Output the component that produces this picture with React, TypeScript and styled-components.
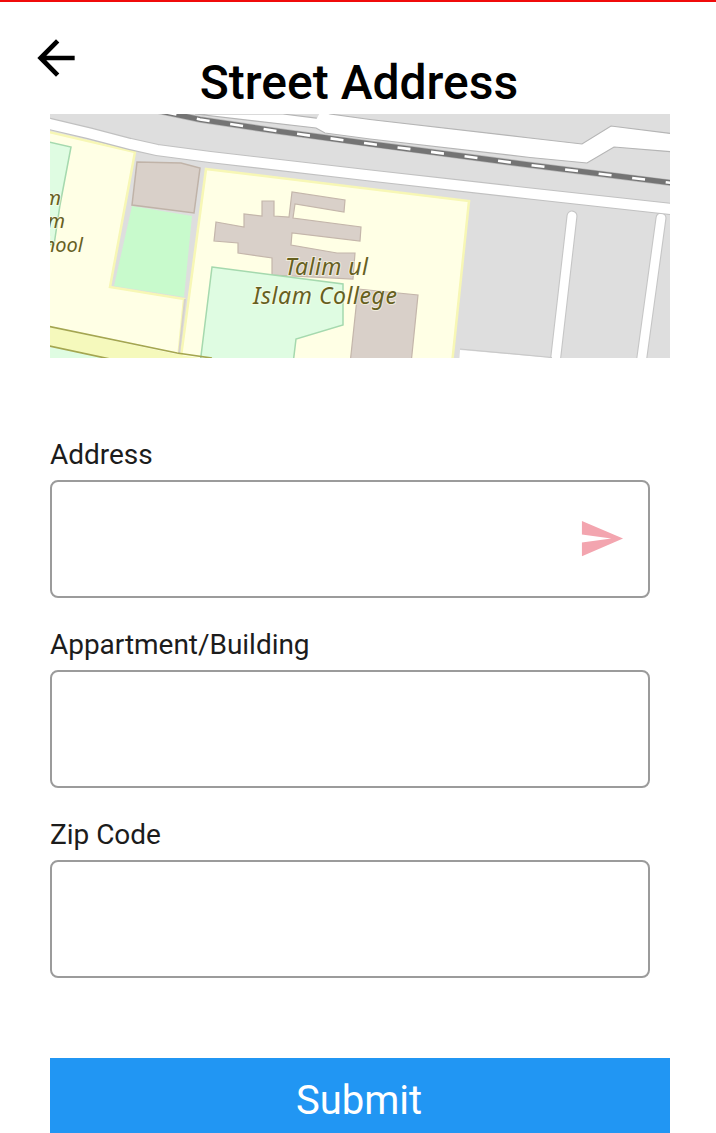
import React from "react";
import styled, { createGlobalStyle } from "styled-components";

const GlobalStyle = createGlobalStyle`
  * { box-sizing: border-box; }
  body { margin: 0; background: #fff; font-family: Roboto, "Liberation Sans", sans-serif; }
`;

const Screen = styled.main`
  display: flex;
  flex-direction: column;
  width: 716px;
  height: 1133px;
  overflow: hidden;
  border-top: 2px solid #f00b0b;
  background: #fff;
`;

const Header = styled.header`
  display: grid;
  flex: none;
  grid-template-columns: 84px 1fr 84px;
  height: 112px;
`;

const BackButton = styled.button`
  width: 56px;
  height: 56px;
  margin: 28px 0 0 28px;
  padding: 0;
  border: 0;
  background: none;
  color: #000;

  svg { display: block; }
`;

const Title = styled.h1`
  margin: 53px 0 0 2px;
  font-size: 48px;
  font-weight: 500;
  line-height: 56px;
  text-align: center;
  white-space: nowrap;
  color: #000;
`;

const MapView = styled.svg`
  display: block;
  flex: none;
  width: 620px;
  height: 244px;
  margin-left: 50px;
`;

const Form = styled.form`
  display: flex;
  flex: none;
  flex-direction: column;
  padding: 80px 46px 0 50px;
`;

const Field = styled.label`
  display: flex;
  flex-direction: column;
  width: 600px;
  height: 190px;
`;

const Caption = styled.span`
  height: 42px;
  font-size: 28px;
  line-height: 33px;
  letter-spacing: -0.03px;
  color: #1c1c1c;
`;

const InputBox = styled.span`
  display: flex;
  align-items: center;
  height: 118px;
  padding-right: 23px;
  border: 2px solid #9b9b9b;
  border-radius: 8px;
`;

const SendIcon = styled.svg`
  flex: none;
  width: 47px;
  height: 47px;
  margin-bottom: 2px;
  fill: #f3a5af;
`;

const Input = styled.input`
  flex: 1;
  height: 100%;
  border: 0;
  outline: 0;
  background: transparent;
  padding: 0 20px;
  font: 28px Roboto, sans-serif;
`;

const SubmitButton = styled.button`
  width: 620px;
  height: 84px;
  margin-top: 50px;
  padding: 1px 2px 0 0;
  border: 0;
  background: #2196f3;
  color: #fff;
  font: 400 40px/83px Roboto, sans-serif;
`;

const MapLabel = styled.text`
  font-family: "Noto Sans", "Open Sans", sans-serif;
  font-style: italic;
  fill: #66601f;
  stroke: #fffde8;
  stroke-opacity: 0.6;
  stroke-width: 2px;
  paint-order: stroke;
`;

const mainRoad = "M40 121.5 L50 124 L90 133.5 L130 144 L157 150 L210 157 L370 175.5 L530 193.5 L680 210";
const railway = "M150 109 L200 119.5 L280 131.5 L370 143.8 L530 165 L680 184";
const laneA = "M572 216 L555 364";
const laneB = "M661 218 L641 364";

function CollegeMap() {
  return (
    <MapView viewBox="50 114 620 244" role="img" aria-label="Map">
      <rect x="50" y="114" width="620" height="244" fill="#dedede" />

      <g fill="#ffffe5" stroke="#f7f7b5" strokeWidth="2.5">
        <path d="M40 130 L135 152 L110 287 L184 299 L178 360 L40 340Z" />
        <path d="M206 169 L469 201 L452 364 L180 364Z" />
      </g>
      <path d="M185 299 L179 354" stroke="#d6d1cd" strokeWidth="2" />
      <path d="M132 206 L192 216 L184 297 L114 286Z" fill="#c8facc" />
      <path d="M137 162 L181 163 L200 168 L194 213 L132 205Z" fill="#d9d0c9" stroke="#c0b3a8" strokeWidth="1.5" />

      <path d="M40 140 L71 147 L60 205 L54 245 L40 243Z" fill="#dffce2" stroke="#a5d9ae" strokeWidth="1.5" />
      <g fill="#d9d0c9" stroke="#c4b6ab" strokeWidth="1.2">
        <path d="M216 222 L244 227 L244 214 L262 216 L262 201 L274 201 L274 216 L289 217 L292 192 L345 200 L344 212 L295 204 L293 218 L361 227 L360 241 L292 233 L291 245 L337 253 L355 253 L353 279 L272 275 L272 258 L238 253 L238 243 L214 241Z" />
        <path d="M358 289 L418 295 L411 364 L350 364Z" />
      </g>
      <path d="M212 267 L343 284 L343 325 L296 339 L293 364 L200 364Z" fill="#dffce2" stroke="#a5d9ae" strokeWidth="1.5" />

      <path d="M40 325 L180 355 L212 360 L120 364 L40 345Z" fill="#f5f9bc" />
      <path d="M40 344 L115 360 L40 364Z" fill="#dffce2" />
      <path d="M40 324.5 L177 353 L212 358 M40 344 L110 359" fill="none" stroke="#a4a650" strokeWidth="1.7" />

      <path
        d="M195 114 L283 114 L320 118.5 L325 112 L330 114 L370 119.5 L530 138 L582 144 L611 126 L675 134 L675 152 L614 147 L587 163 L530 157.5 L370 139 L325 133 L316 128Z"
        fill="#fff" stroke="#b5b5b5" strokeWidth="1.2"
      />
      <path d="M320 121 L327 108" stroke="#fff" strokeWidth="8" />

      <g fill="none" strokeLinecap="round">
        <path d={laneA} stroke="#c6c6c6" strokeWidth="11" />
        <path d={laneB} stroke="#c6c6c6" strokeWidth="11" />
        <path d={laneA} stroke="#fff" strokeWidth="8.8" />
        <path d={laneB} stroke="#fff" strokeWidth="8.8" />
      </g>
      <path d="M460 350 L548 357.5 L556 364 L459 364Z" fill="#fff" />
      <path d="M460 349 L552 357.5" stroke="#c9c9c9" strokeWidth="1.2" />

      <path d={mainRoad} fill="none" stroke="#c1c1c1" strokeWidth="12.2" />
      <path d={mainRoad} fill="none" stroke="#fff" strokeWidth="10" />

      <path d={railway} fill="none" stroke="#b8b8b8" strokeWidth="6.6" />
      <path d={railway} fill="none" stroke="#747474" strokeWidth="5.2" />
      <path d={railway} fill="none" stroke="#fff" strokeWidth="2.6" strokeDasharray="13 20.8" strokeDashoffset="-14" />

      <MapLabel x="285" y="274.5" fontSize="23" textLength="83">Talim ul</MapLabel>
      <MapLabel x="253" y="303.5" fontSize="23" textLength="144">Islam College</MapLabel>
      <MapLabel x="61" y="205" fontSize="20" textAnchor="end">m</MapLabel>
      <MapLabel x="65" y="228" fontSize="20" textAnchor="end">m</MapLabel>
      <MapLabel x="83" y="252" fontSize="20" textAnchor="end">hool</MapLabel>
    </MapView>
  );
}

export default function App() {
  return (
    <>
      <GlobalStyle />
      <Screen>
        <Header>
          <BackButton aria-label="Back">
            <svg width="56" height="56" viewBox="0 0 24 24" fill="currentColor">
              <path d="M20 11H7.83l5.59-5.59L12 4l-8 8 8 8 1.41-1.41L7.83 13H20v-2z" />
            </svg>
          </BackButton>
          <Title>Street Address</Title>
        </Header>
        <CollegeMap />
        <Form onSubmit={(e) => e.preventDefault()}>
          <Field>
            <Caption>Address</Caption>
            <InputBox>
              <Input />
              <SendIcon viewBox="0 0 24 24">
                <path d="M2.01 21L23 12 2.01 3 2 10l15 2-15 2z" />
              </SendIcon>
            </InputBox>
          </Field>
          <Field>
            <Caption>Appartment/Building</Caption>
            <InputBox><Input /></InputBox>
          </Field>
          <Field>
            <Caption>Zip Code</Caption>
            <InputBox><Input /></InputBox>
          </Field>
          <SubmitButton type="submit">Submit</SubmitButton>
        </Form>
      </Screen>
    </>
  );
}
